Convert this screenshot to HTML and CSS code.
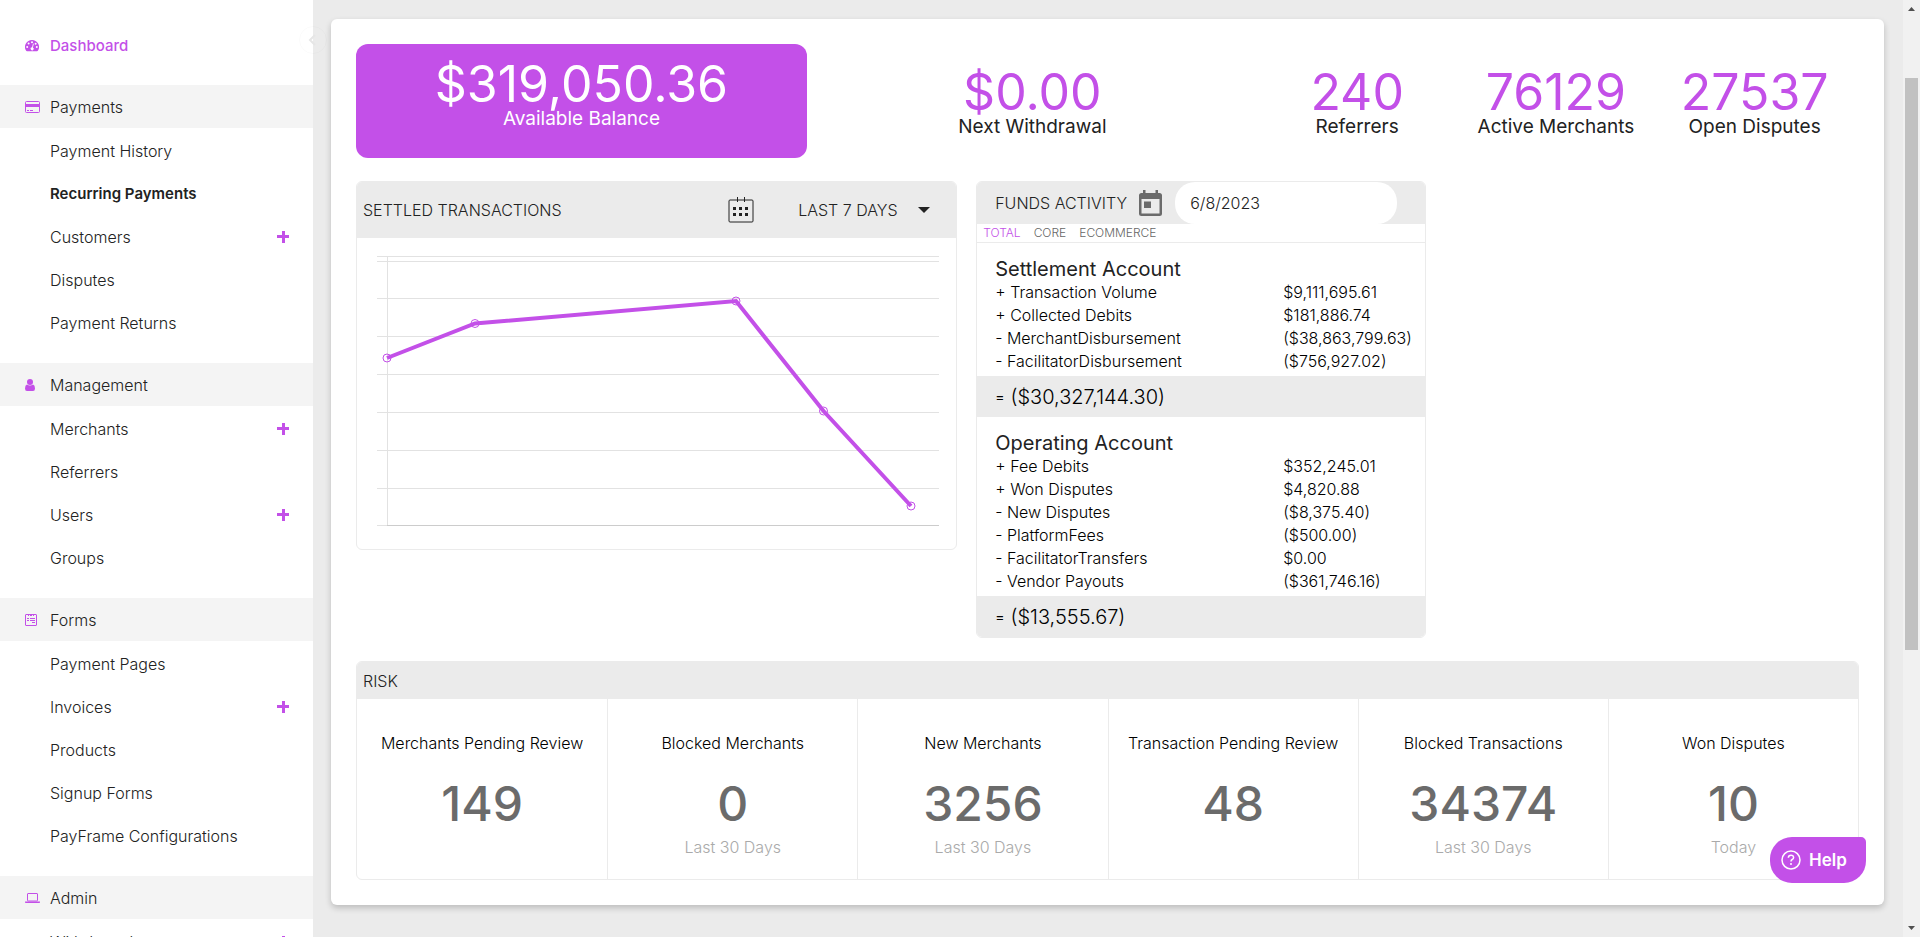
FILE: index.html
```html
<!DOCTYPE html>
<html lang="en">
<head>
<meta charset="utf-8">
<title>Dashboard</title>
<link rel="stylesheet" href="styles.css">
</head>
<body class="app">
<nav class="sidebar" aria-label="Main">
  <a class="nav-row nav-home" href="#">
    <span class="nav-icon"><svg width="14" height="12" viewBox="0 0 14 12"><path class="fill" d="M7 0a7 7 0 0 0-6 10.600q.4.700 1 .7h10q.6 0 1-.7A7 7 0 0 0 7 0z"/><g fill="#fff"><circle cx="2.200" cy="7" r="1"/><circle cx="3.600" cy="3.600" r="1"/><circle cx="7" cy="2.200" r="1"/><circle cx="11.800" cy="7" r="1"/><circle cx="10.600" cy="3.700" r="1"/><path d="M8 3.600l.8.200-.9 3.700a1.500 1.500 0 1 1-.8-.2z"/></g></svg></span>Dashboard</a>
  <section class="nav-section">
    <a class="nav-row nav-head" href="#"><span class="nav-icon"><svg width="15" height="12" viewBox="0 0 15 12"><rect class="line" x=".5" y=".5" width="14" height="11" rx="1"/><path class="fill" d="M1 3h13v3H1zM2 9h2v1H2zM5 9h3v1H5z"/></svg></span>Payments</a>
    <ul class="nav-list">
      <li><a class="nav-row" href="#">Payment History</a></li>
      <li><a class="nav-row nav-strong" href="#">Recurring Payments</a></li>
      <li><a class="nav-row" href="#">Customers</a><button class="plus" aria-label="Expand Customers"></button></li>
      <li><a class="nav-row" href="#">Disputes</a></li>
      <li><a class="nav-row" href="#">Payment Returns</a></li>
    </ul>
  </section>
  <section class="nav-section">
    <a class="nav-row nav-head" href="#"><span class="nav-icon"><svg width="10" height="12" viewBox="0 0 10 12"><circle class="fill" cx="5" cy="3" r="3"/><path class="fill" d="M2 5.500q3 2.200 6 0 2 .7 2 4 0 2.500-2 2.500H2q-2 0-2-2.500 0-3.300 2-4z"/></svg></span>Management</a>
    <ul class="nav-list">
      <li><a class="nav-row" href="#">Merchants</a><button class="plus" aria-label="Expand Merchants"></button></li>
      <li><a class="nav-row" href="#">Referrers</a></li>
      <li><a class="nav-row" href="#">Users</a><button class="plus" aria-label="Expand Users"></button></li>
      <li><a class="nav-row" href="#">Groups</a></li>
    </ul>
  </section>
  <section class="nav-section">
    <a class="nav-row nav-head" href="#"><span class="nav-icon"><svg width="12" height="12" viewBox="0 0 12 12"><rect class="line" x=".5" y=".5" width="11" height="11" rx=".5"/><path class="fill" d="M3 1h1v1H3zM5 1h2v1H5zM8 1h1v1H8zM2 4h2v1H2zM5 4h5v1H5zM2 6h2v1H2zM5 6h5v1H5zM7 8h3v1H7z"/></svg></span>Forms</a>
    <ul class="nav-list">
      <li><a class="nav-row" href="#">Payment Pages</a></li>
      <li><a class="nav-row" href="#">Invoices</a><button class="plus" aria-label="Expand Invoices"></button></li>
      <li><a class="nav-row" href="#">Products</a></li>
      <li><a class="nav-row" href="#">Signup Forms</a></li>
      <li><a class="nav-row" href="#">PayFrame Configurations</a></li>
    </ul>
  </section>
  <section class="nav-section">
    <a class="nav-row nav-head" href="#"><span class="nav-icon"><svg width="15" height="10" viewBox="0 0 15 10"><rect class="line" x="2.500" y=".5" width="10" height="7.500" rx=".5"/><path class="fill" d="M0 8.500h15v.7q0 .8-.8.8H.8Q0 10 0 9.200z"/></svg></span>Admin</a>
    <ul class="nav-list">
      <li><a class="nav-row" href="#">Withdrawals</a><button class="plus" aria-label="Expand Withdrawals"></button></li>
    </ul>
  </section>
</nav>
<button class="collapse" aria-label="Collapse sidebar"><svg width="28" height="28" viewBox="0 0 28 28"><path d="M16 9l-5 5 5 5"/></svg></button>

<main class="content">
  <div class="card">
    <div class="stats">
      <div class="balance stat"><span class="stat-value">$319,050.36</span><span class="stat-label">Available Balance</span></div>
      <div class="stat"><span class="stat-value">$0.00</span><span class="stat-label">Next Withdrawal</span></div>
      <div class="counts">
        <div class="stat"><span class="stat-value">240</span><span class="stat-label">Referrers</span></div>
        <div class="stat"><span class="stat-value">76129</span><span class="stat-label">Active Merchants</span></div>
        <div class="stat"><span class="stat-value">27537</span><span class="stat-label">Open Disputes</span></div>
      </div>
    </div>

    <div class="middle">
      <section class="panel settled">
        <header class="panel-head settled-head">
          <h2 class="title">SETTLED TRANSACTIONS</h2>
          <svg class="cal-icon" width="26" height="26" viewBox="0 0 26 26"><rect x="1" y="3" width="24" height="22" rx="1" fill="none" stroke="#222"/><path d="M9.500 0v5M16.500 0v5" stroke="#222"/><path fill="#222" d="M5 10h3v3H5zM11 10h3v3h-3zM17 10h3v3h-3zM5 16h3v3H5zM11 16h3v3h-3zM17 16h3v3h-3z"/></svg>
          <span class="range"><select class="range-select" aria-label="Period"><option>LAST 7 DAYS</option></select><svg width="12" height="6" viewBox="0 0 12 6"><path fill="#222" d="M0 0h12L6 6z"/></svg></span>
        </header>
        <svg class="chart" viewBox="0 0 562 276" role="img" aria-label="Settled transactions, last 7 days">
          <path class="grid" d="M0 3.500h562M0 8.500h562M0 45.500h562M0 83.500h562M0 121.500h562M0 159.500h562M0 197.500h562M0 235.500h562M0 272.500h562M10.500 3v270"/>
          <path class="axis" d="M10 272.500h552"/>
          <path class="trend" d="M10 105L98 70.500 359 48 446.500 158 534 253"/>
          <g class="dots"><circle cx="10" cy="105" r="4"/><circle cx="98" cy="70.500" r="4"/><circle cx="359" cy="48" r="4"/><circle cx="446.500" cy="158" r="4"/><circle cx="534" cy="253" r="4"/></g>
        </svg>
      </section>

      <section class="panel funds">
        <header class="panel-head funds-head">
          <h2 class="title funds-title"><label for="funds-date">FUNDS ACTIVITY</label></h2>
          <svg class="date-icon" width="23" height="26" viewBox="0 0 23 26"><path fill="#6b6b6b" fill-rule="evenodd" d="M4 0h2.500v3h10V0H19v3h1.500Q23 3 23 5.500v18q0 2.500-2.500 2.500h-18Q0 26 0 23.500v-18Q0 3 2.500 3H4zM2.500 9v14.500h18V9zM5 11.500h7v6.500H5z"/></svg>
          <input class="date" id="funds-date" type="text" value="6/8/2023">
        </header>
        <div class="tabs"><button class="tab tab-on">TOTAL</button><button class="tab">CORE</button><button class="tab">ECOMMERCE</button></div>
        <div class="account">
          <h3 class="account-name">Settlement Account</h3>
          <table class="ledger">
            <tr><td>+ Transaction Volume</td><td>$9,111,695.61</td></tr>
            <tr><td>+ Collected Debits</td><td>$181,886.74</td></tr>
            <tr><td>- MerchantDisbursement</td><td>($38,863,799.63)</td></tr>
            <tr><td>- FacilitatorDisbursement</td><td>($756,927.02)</td></tr>
          </table>
        </div>
        <div class="sum"><span class="eq">=</span> ($30,327,144.30)</div>
        <div class="account">
          <h3 class="account-name">Operating Account</h3>
          <table class="ledger">
            <tr><td>+ Fee Debits</td><td>$352,245.01</td></tr>
            <tr><td>+ Won Disputes</td><td>$4,820.88</td></tr>
            <tr><td>- New Disputes</td><td>($8,375.40)</td></tr>
            <tr><td>- PlatformFees</td><td>($500.00)</td></tr>
            <tr><td>- FacilitatorTransfers</td><td>$0.00</td></tr>
            <tr><td>- Vendor Payouts</td><td>($361,746.16)</td></tr>
          </table>
        </div>
        <div class="sum"><span class="eq">=</span> ($13,555.67)</div>
      </section>
    </div>

    <section class="panel risk">
      <header class="panel-head risk-head"><h2 class="title">RISK</h2></header>
      <div class="risk-grid">
        <div class="risk-cell"><span>Merchants Pending Review</span><strong>149</strong></div>
        <div class="risk-cell"><span>Blocked Merchants</span><strong>0</strong><small>Last 30 Days</small></div>
        <div class="risk-cell"><span>New Merchants</span><strong>3256</strong><small>Last 30 Days</small></div>
        <div class="risk-cell"><span>Transaction Pending Review</span><strong>48</strong></div>
        <div class="risk-cell"><span>Blocked Transactions</span><strong>34374</strong><small>Last 30 Days</small></div>
        <div class="risk-cell"><span>Won Disputes</span><strong>10</strong><small>Today</small></div>
      </div>
    </section>
  </div>
</main>

<div class="scrollbar" aria-hidden="true">
  <svg width="17" height="17" viewBox="0 0 17 17"><path fill="#505050" d="M5 11h7L8.500 7z"/></svg>
  <div class="thumb"></div>
  <svg width="17" height="17" viewBox="0 0 17 17"><path fill="#505050" d="M5 6h7l-3.500 4z"/></svg>
</div>
<button class="help"><svg width="20" height="20" viewBox="0 0 20 20"><circle cx="10" cy="10" r="9"/><path d="M7.300 7.800q.2-2.500 2.700-2.500t2.600 2.200q0 1.300-1.400 2-1.200.7-1.200 2"/><circle class="q-dot" cx="10" cy="14" r="1"/></svg>Help</button>
</body>
</html>
```
FILE: styles.css
```css
* { box-sizing: border-box; }

.app {
  margin: 0;
  height: 100vh;
  display: flex;
  overflow: hidden;
  background: #ebebeb;
  color: #222;
  font: 16px/24px Inter, "Liberation Sans", sans-serif;
  font-weight: 300;
}
button, input, select { font: inherit; color: inherit; border: 0; padding: 0; background: none; }
h2, h3, ul { margin: 0; padding: 0; font-weight: inherit; font-size: inherit; list-style: none; }
svg { display: block; flex: none; }

/* Sidebar */
.sidebar { width: 313px; flex: none; background: #fff; padding-top: 24px; overflow: hidden; }
.nav-row { flex: 1; display: flex; align-items: center; height: 43px; padding-left: 50px; color: #222; text-decoration: none; }
.nav-home { margin-bottom: 18px; padding-left: 25px; color: #c350e8; font-size: 15px; font-weight: 500; }
.nav-head { padding-left: 25px; background: #f4f4f4; }
.nav-icon { width: 25px; }
.nav-icon .fill { fill: #c350e8; }
.nav-icon .line { fill: none; stroke: #c350e8; }
.nav-strong { font-size: 15px; font-weight: 600; }
.nav-list { padding: 1px 24px 19px 0; }
.nav-list li { display: flex; align-items: center; }
.plus {
  width: 12px; height: 12px;
  background: linear-gradient(#c350e8, #c350e8) center / 12px 3px no-repeat, linear-gradient(#c350e8, #c350e8) center / 3px 12px no-repeat;
}
.collapse { position: absolute; left: 299px; top: 26px; width: 28px; height: 28px; border-radius: 50%; border: 1px solid rgba(0, 0, 0, .02); }
.collapse svg { margin: -1px; }
.collapse path { fill: none; stroke: #e6e6e6; stroke-width: 2; }

/* Main card */
.content { flex: 1; min-width: 0; padding: 19px 19px 0 18px; }
.card { background: #fff; border-radius: 6px; padding: 25px; box-shadow: 0 3px 6px rgba(0, 0, 0, .2); }

.stats { display: grid; grid-template-columns: 3fr 3fr 4fr; height: 114px; }
.stat { display: flex; flex-direction: column; align-items: center; padding-top: 24px; }
.stat-value { color: #c350e8; font-size: 50px; line-height: 48px; font-weight: 400; }
.stat-label { font-size: 19px; line-height: 22px; font-weight: 400; }
.balance { padding-top: 16px; background: #c350e8; border-radius: 12px; color: #fff; }
.balance .stat-value { color: #fff; }
.counts { display: grid; grid-template-columns: repeat(3, 1fr); padding-right: 5px; }

.panel { border: 1px solid #ebebeb; border-radius: 6px; overflow: hidden; }
.panel-head { display: flex; align-items: center; background: #ebebeb; }
.middle { display: grid; grid-template-columns: 4fr 3fr 3fr; align-items: start; margin-top: 23px; }

.settled-head { height: 56px; padding: 0 26px 0 6px; }
.cal-icon { margin-left: auto; }
.range { display: flex; align-items: center; margin-left: 44px; }
.range-select { appearance: none; width: 120px; height: 24px; }
.chart { display: block; width: 562px; max-width: calc(100% - 37px); margin: 15px 18px 20px 20px; }
.grid { stroke: #e2e2e2; fill: none; }
.axis { stroke: #ccc; }
.trend { fill: none; stroke: #c350e8; stroke-width: 4; }
.dots { fill: none; stroke: #c350e8; }

.funds { margin-left: 19px; margin-right: -18px; }
.funds-head { height: 42px; padding-left: 18px; }
.funds-title { width: 144px; }
.date { width: 222px; height: 42px; margin-left: 13px; padding: 0 15px; background: #fff; border-radius: 20px; }
.tabs { display: flex; gap: 13px; padding: 0 6px; border-bottom: 1px solid #ebebeb; }
.tab { height: 18px; font-size: 12px; line-height: 18px; color: #666; }
.tab-on { color: #c350e8; }
.account { padding: 14px 0 3px 18px; }
.account-name { font-size: 20px; font-weight: 400; }
.ledger { width: 100%; border-collapse: collapse; color: #000; line-height: 23px; }
.ledger td { padding: 0; }
.ledger td:first-child { width: 67%; }
.sum { display: flex; align-items: center; gap: 6px; height: 41px; padding-left: 18px; background: #ebebeb; color: #000; font-size: 20px; }
.eq { font-size: 14px; font-weight: 400; }

.risk { margin-top: 23px; }
.risk-head { height: 37px; padding-left: 6px; }
.risk-grid { display: grid; grid-template-columns: repeat(6, 1fr); height: 180px; }
.risk-cell { display: flex; flex-direction: column; align-items: center; padding-top: 32px; border-left: 1px solid #ebebeb; color: #000; }
.risk-cell:first-child { border-left: 0; }
.risk-cell strong { margin-top: 25px; font-size: 48px; line-height: 48px; font-weight: 500; color: #6b6b6b; }
.risk-cell small { margin-top: 7px; font-size: 16px; color: #aaa; }

/* Overlays */
.scrollbar { flex: none; width: 17px; background: #f1f1f1; display: flex; flex-direction: column; }
.thumb { width: 13px; margin: 61px 2px auto; height: 61%; background: #c1c1c1; }
.help {
  position: absolute; right: 54px; bottom: 54px;
  display: flex; align-items: center; gap: 8px;
  width: 96px; height: 46px; padding-left: 11px;
  border-radius: 22px 5px 22px 22px; background: #c350e8; color: #fff; font-size: 17px; font-weight: 600;
}
.help path, .help circle { fill: none; stroke: #fff; stroke-width: 1.500; }
.help .q-dot { fill: #fff; stroke: none; }
```
